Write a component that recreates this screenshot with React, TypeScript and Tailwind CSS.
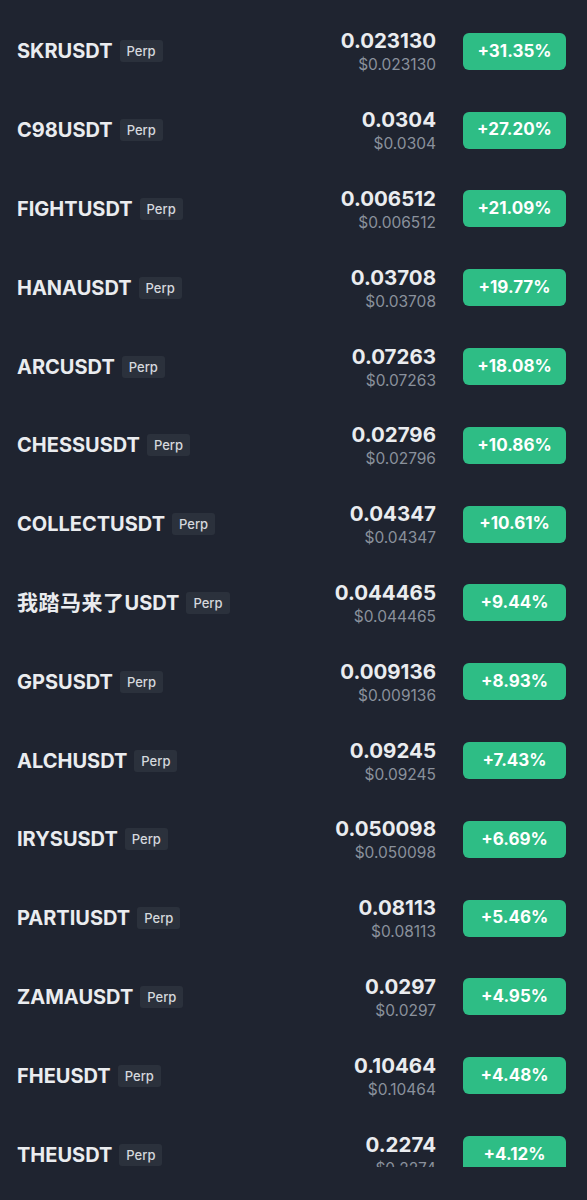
const rows = [
  { sym: "SKRUSDT", price: "0.023130", chg: "+31.35%" },
  { sym: "C98USDT", price: "0.0304", chg: "+27.20%" },
  { sym: "FIGHTUSDT", price: "0.006512", chg: "+21.09%" },
  { sym: "HANAUSDT", price: "0.03708", chg: "+19.77%" },
  { sym: "ARCUSDT", price: "0.07263", chg: "+18.08%" },
  { sym: "CHESSUSDT", price: "0.02796", chg: "+10.86%" },
  { sym: "COLLECTUSDT", price: "0.04347", chg: "+10.61%" },
  { sym: "我踏马来了", price: "0.044465", chg: "+9.44%", cjk: true },
  { sym: "GPSUSDT", price: "0.009136", chg: "+8.93%" },
  { sym: "ALCHUSDT", price: "0.09245", chg: "+7.43%" },
  { sym: "IRYSUSDT", price: "0.050098", chg: "+6.69%" },
  { sym: "PARTIUSDT", price: "0.08113", chg: "+5.46%" },
  { sym: "ZAMAUSDT", price: "0.0297", chg: "+4.95%" },
  { sym: "FHEUSDT", price: "0.10464", chg: "+4.48%" },
  { sym: "THEUSDT", price: "0.2274", chg: "+4.12%" },
];

export default function App() {
  return (
    <div
      className="w-[587px] h-[1200px] bg-[#1f2430] text-white"
      style={{ fontFamily: "Inter, 'Noto Sans CJK SC', sans-serif" }}
    >
      <div className="h-[1167px] overflow-hidden pt-[12px]">
        {rows.map((r) => (
          <div key={r.sym} className="h-[78.8px] flex items-center pl-[17px] pr-[21px]">
            <div className="flex-1 flex items-center gap-[7px]">
              <span className="text-[20px] font-bold text-[#eaecef]">
                {r.cjk ? (
                  <>
                    <span className="text-[21px] tracking-[0.5px]">{r.sym}</span>USDT
                  </>
                ) : (
                  r.sym
                )}
              </span>
              <span className="bg-[#2b313c] text-[#d5d8dd] text-[13px] font-medium px-[7px] h-[22px] leading-[22px] rounded-[3px]">
                Perp
              </span>
            </div>
            <div className="flex flex-col items-end mr-[27px] pt-[3px]">
              <span className="text-[20.5px] font-bold leading-[24px] text-[#eaecef]">{r.price}</span>
              <span className="text-[15.5px] leading-[22px] mt-[1px] text-[#8a919c]">
                ${r.price}
              </span>
            </div>
            <div className="w-[103px] h-[37px] rounded-[6px] bg-[#2ebd85] flex items-center justify-center text-[17px] font-bold text-white">
              {r.chg}
            </div>
          </div>
        ))}
      </div>
    </div>
  );
}
